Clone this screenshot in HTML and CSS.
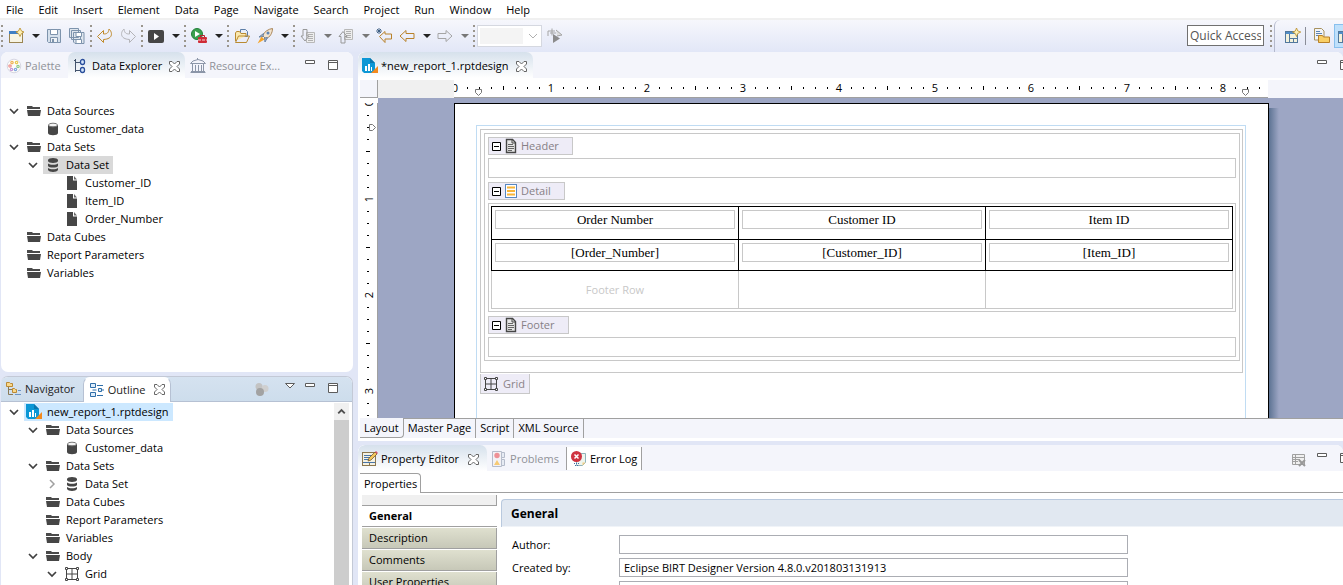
FILE: index.html
```
<!DOCTYPE html>
<html lang="en">
<head>
    <meta charset="UTF-8">
    <meta name="viewport" content="width=device-width, initial-scale=1.0">
    <title>new_report_1.rptdesign - Report Design</title>
    <link rel="stylesheet" href="styles.css">
</head>
<body>

    <!-- icon library -->
    <svg class="library" aria-hidden="true">
        <defs>
            <linearGradient id="gold" x1="0" y1="0" x2="0" y2="1"><stop offset="0" stop-color="#fffbe8"/><stop offset="1" stop-color="#f5d27a"/></linearGradient>
            <linearGradient id="grey" x1="0" y1="0" x2="0" y2="1"><stop offset="0" stop-color="#ffffff"/><stop offset="1" stop-color="#d8d8d8"/></linearGradient>
        </defs>
        <symbol id="i-new" viewBox="0 0 16 16"><rect x="1.500" y="3.500" width="13" height="11" fill="#f7f4e4" stroke="#9a8553"/><path d="M1 3h9v3H1z" fill="#3f7fc4"/><path d="M12 0l1.500 3 2.500 1-2.500 1.500L12 8.500l-1.500-3L8 4l2.500-1z" fill="#fdf0b5" stroke="#b98d2a" stroke-width=".8"/></symbol>
        <symbol id="i-save" viewBox="0 0 16 16"><path d="M1.500 1.500h13v13h-12l-1-1z" fill="#d5e0ec" stroke="#7d93ac"/><path d="M4.500 1.500h7v5h-7z" fill="#fff" stroke="#7d93ac"/><path d="M4.500 9.500h7v5h-7z" fill="#eef2f6" stroke="#7d93ac"/><path d="M6 11h2v3H6z" fill="#7d93ac"/></symbol>
        <symbol id="i-saveall" viewBox="0 0 16 16"><g fill="#dfe6ee" stroke="#7d93ac"><path d="M.5.5h9v9h-9zM2.500 2.500h9v9h-9zM4.500 4.500h10.500v11H6l-1.500-1.500z"/><path d="M7 4.500h5.500v4H7zM7 11.500h5.500v4H7z" fill="#fff"/></g></symbol>
        <symbol id="i-undo" viewBox="0 0 16 16"><path d="M.5 8.500L6.500 2.500v3.500c3.500 0 5-1 5.500-5 3.500 3 4.500 10-5.500 10.500v3z" fill="url(#gold)" stroke="#c08a2b"/></symbol>
        <symbol id="i-redo" viewBox="0 0 16 16"><path d="M15.500 8.500L9.500 2.500v3.500c-3.500 0-5-1-5.500-5-3.500 3-4.500 10 5.500 10.500v3z" fill="url(#grey)" stroke="#b4b4b8"/></symbol>
        <symbol id="i-view" viewBox="0 0 16 16"><rect y="2" width="16" height="13" rx="2" fill="#464646"/><path d="M6 5l5 3.500L6 12z" fill="#fff"/></symbol>
        <symbol id="i-run" viewBox="0 0 16 16"><circle cx="6" cy="6" r="5.500" fill="#3ba04e" stroke="#23803a"/><path d="M4 3l5 3-5 3z" fill="#fff"/><path d="M9.500 9V7.500h4V9" fill="none" stroke="#b3202c"/><rect x="7" y="9" width="9" height="6" rx="1" fill="#cf2b36"/><path d="M7 12h9" stroke="#fff" stroke-width=".8" stroke-dasharray="3 1"/></symbol>
        <symbol id="i-open" viewBox="0 0 16 16"><path d="M6.500 1.500h5l2 2v5h-7z" fill="#e8eef6" stroke="#5d7ea7"/><path d="M1.500 13V5l1-1.500h3L7 5.500h5V8" fill="#fbe9b0" stroke="#b98a31"/><path d="M1.500 14.500l3-6.500h11l-3 6.500z" fill="url(#gold)" stroke="#b98a31"/></symbol>
        <symbol id="i-rocket" viewBox="0 0 16 16"><path d="M15.500.5c-4 .5-8 3-10 7L9 11c4-2 6.500-6 6.500-10.500z" fill="#f1e3cf" stroke="#a98557"/><path d="M6.500 5.500L2 9l4-.5zM10.500 9.500L8 14l-.5-4z" fill="#9fb2c9" stroke="#6c85a4"/><path d="M4.500 8.500l3 3L.5 15.500z" fill="#f6a52a"/><circle cx="11" cy="5" r="1.500" fill="#5b83b5"/></symbol>
        <symbol id="i-next" viewBox="0 0 16 16"><path d="M6.500 4.500h8v10h-8z" fill="#eee" stroke="#b8b8b8"/><path d="M8 6.500h5M8 8.500h5M8 10.500h5M8 12.500h5" stroke="#b0b0b0"/><path d="M3 1.500h4V8h2l-4 5L1 8h2z" fill="url(#grey)" stroke="#999"/></symbol>
        <symbol id="i-prev" viewBox="0 0 16 16"><path d="M6.500 1.500h8v10h-8z" fill="#eee" stroke="#b8b8b8"/><path d="M8 3.500h5M8 5.500h5M8 7.500h5M8 9.500h5" stroke="#b0b0b0"/><path d="M3 15V8.500H1l4-5 4 5H7V15z" fill="url(#grey)" stroke="#999"/></symbol>
        <symbol id="i-lastedit" viewBox="0 0 16 16"><path d="M3.500 8.500L9 3.500V6h6.500v5H9v3.500z" fill="url(#gold)" stroke="#b9822a"/><path d="M3 0v6M0 3h6M1 1l4 4M5 1L1 5" stroke="#38597f" stroke-width=".9"/></symbol>
        <symbol id="i-back" viewBox="0 0 16 16"><path d="M1 8L7 2.500V5.500h8v5H7v3z" fill="url(#gold)" stroke="#b9822a"/></symbol>
        <symbol id="i-forward" viewBox="0 0 16 16"><path d="M15 8L9 2.500V5.500H1v5h8v3z" fill="url(#grey)" stroke="#a5a5a5"/></symbol>
        <symbol id="i-visit" viewBox="0 0 16 16"><path d="M1 8V3h7M3 5h6" fill="none" stroke="#a5a5a5"/><path d="M5 .5v7M9 2l6 5-5 1" fill="#ddd" stroke="#a5a5a5"/><path d="M6 6l7 4.500L6 15z" fill="#8b8b8b"/></symbol>
        <symbol id="i-perspective" viewBox="0 0 16 16"><rect x=".5" y="3.500" width="12" height="11" fill="#f3f1dc" stroke="#52789c"/><path d="M1 4h9v2H1z" fill="#4f8bc6"/><path d="M4.500 6v8M4.500 10.500h8M8.500 10.500v4" stroke="#52789c"/><path d="M11.500 0l1.300 3 3 1-3 1.500-1.300 3-1.200-3L7.500 4l2.800-1z" fill="#fdf0b5" stroke="#b98d2a" stroke-width=".8"/></symbol>
        <symbol id="i-files" viewBox="0 0 16 16"><path d="M.5.500h7l2.500 2.500v9H.5z" fill="#f2f4f8" stroke="#a8925e"/><path d="M2 3.500h4M2 5.500h6M2 7.500h4" stroke="#5c83b3"/><path d="M4.500 14.500v-7h4l1 1.500h6v5.500z" fill="#f9cf66" stroke="#b98128"/></symbol>
        <symbol id="i-report" viewBox="0 0 16 16"><path d="M0 0h8l5 5v10H2l-2-2z" fill="#0c97d5"/><path d="M8 0l5 5H8z" fill="#0a76ad"/><path d="M3 8h2v5H3zM6 6h2v7H6zM9 9h1v4H9z" fill="#fff"/><path d="M16 8v7H9z" fill="#f38a1e"/></symbol>
        <symbol id="i-palette" viewBox="0 0 16 16"><circle cx="8" cy="8" r="6.800" fill="#fdfdf8" stroke="#d6d6e2"/><g fill="none" stroke-width="1.200"><circle cx="6" cy="4.500" r="1.200" stroke="#efb45a"/><circle cx="10.500" cy="4.500" r="1.200" stroke="#e8ca52"/><circle cx="12" cy="8.500" r="1.200" stroke="#8fcb8f"/><circle cx="9.500" cy="11.500" r="1.200" stroke="#84a9e0"/><circle cx="4" cy="8" r="1.200" stroke="#ee9090"/><circle cx="5.500" cy="11.500" r="1.200" stroke="#c59ad8"/></g></symbol>
        <symbol id="i-explorer" viewBox="0 0 16 16"><path d="M1 2.500h1.500M2.500 1v13M2.500 4.500H7M2.500 12.500H7" fill="none" stroke="#44546c"/><g fill="#d5e6fa" stroke="#2b4f9b" stroke-width="1.300"><rect x="7.500" y="1.500" width="4" height="5" rx="2"/><rect x="7.500" y="9.500" width="4" height="5" rx="2"/></g></symbol>
        <symbol id="i-resource" viewBox="0 0 16 16"><path d="M.5 5.500h15L13 3 8 1.500 3 3zM2.500 6v7M5.500 7v6M8.500 7v6M11.500 7v6M13.500 6v7M.5 14.500h15M7.500 0v2M1 13.500h14" fill="none" stroke="#8c96a8"/></symbol>
        <symbol id="i-navigator" viewBox="0 0 16 16"><path d="M2.500 6v7.500H7M3 8.500h3" fill="none" stroke="#8a7a55"/><path d="M.5 1.500h3l1 1h2v3h-6zM6.500 7.500h2l1 1h1v3h-4z" fill="#f9d88a" stroke="#bb8a35"/><path d="M12 9.500h3M9 13.500h6" stroke="#6b94c6"/></symbol>
        <symbol id="i-outline" viewBox="0 0 16 16"><g fill="#dcecfb" stroke="#2f6ea8"><path d="M1.500 1.500h5v4h-5zM1.500 10.500h5v4h-5zM9.500 6.500h3v3h-3z"/></g><path d="M8 3.500h6M8 13.500h6M13 8h2M3.500 8h4" stroke="#2f6ea8"/></symbol>
        <symbol id="i-editor" viewBox="0 0 16 16"><rect x=".5" y="1.500" width="13" height="13" fill="#f4f1e2" stroke="#8a764f"/><path d="M2 4.500h8M2 6.500h7M2 8.500h5M1 11.500h12" stroke="#4774a8"/><path d="M7.500 12v2" stroke="#8a764f"/><path d="M6 10l1-3 6-6 2 2-6 6z" fill="#f3c75d" stroke="#7a5a2a" stroke-width=".8"/><path d="M13 1l2 2 1-1-2-2z" fill="#d6506a"/></symbol>
        <symbol id="i-problems" viewBox="0 0 16 16"><path d="M1.500.5h9v15h-9z" fill="#f3f2f5" stroke="#b5bccb"/><path d="M10.500 1.500h3v5h-3zM10.500 8.500h3v6h-3z" fill="#e6ebf3" stroke="#b5bccb"/><circle cx="6" cy="4.500" r="2.700" fill="#ee9196"/><path d="M3 14l3-5 3 5z" fill="#f7ca74"/></symbol>
        <symbol id="i-error" viewBox="0 0 16 16"><path d="M5.500 2.500h9v9l-3 3h-6z" fill="#eef5ee" stroke="#8fb3b9"/><path d="M14.500 11.500l-3 3v-3z" fill="#f2ce81"/><circle cx="5.500" cy="5.500" r="5.500" fill="#cf3340"/><path d="M3.500 3.500l4 4M7.500 3.500l-4 4" stroke="#fff" stroke-width="1.500"/><path d="M3 12.500h5M4 14.500h4" stroke="#3e6ca5" stroke-dasharray="1 1"/></symbol>
        <symbol id="i-folder" viewBox="0 0 16 16"><path d="M1 3h5l1 1h7v2H1z" fill="#4a4a4a"/><path d="M1 7h14l-1 6H2z" fill="#464646"/></symbol>
        <symbol id="i-source" viewBox="0 0 16 16"><path d="M3 4v8c0 3 10 3 10 0V4z" fill="#464646"/><ellipse cx="8" cy="4" rx="4.500" ry="1.800" fill="#f4f4f4" stroke="#777"/></symbol>
        <symbol id="i-set" viewBox="0 0 16 16"><g fill="#464646"><path d="M3 3c0-2.700 10-2.700 10 0v1c0 2.500-10 2.500-10 0z"/><path d="M3 6.500c2 1.700 8 1.700 10 0V9c-1 2-9 2-10 0zM3 11c2 1.700 8 1.700 10 0v2c-1 2.500-9 2.500-10 0z"/></g></symbol>
        <symbol id="i-column" viewBox="0 0 16 16"><path d="M3 1h6v4.500h4V15H3z" fill="#464646"/><path d="M10 1l3 3.500h-3z" fill="#6a6a6a"/></symbol>
        <symbol id="i-grid" viewBox="0 0 16 16"><path d="M2.500 2.500h11v11h-11zM8 2.500v11M2.500 8h11" fill="none" stroke="#464646"/><path d="M1.500 1.500h2v2h-2zM12.500 1.500h2v2h-2zM1.500 12.500h2v2h-2zM12.500 12.500h2v2h-2z" fill="#fff" stroke="#464646"/></symbol>
        <symbol id="i-band" viewBox="0 0 16 16"><path d="M3.500 1.500h6l3 3v10h-9z" fill="#e6e6e6" stroke="#464646" stroke-width="1.400"/><path d="M9 1.500V5h4" fill="none" stroke="#464646"/><path d="M5 6.500h5M5 8.500h6M5 10.500h6M5 12.500h4" stroke="#666"/></symbol>
        <symbol id="i-detail" viewBox="0 0 16 16"><rect x="2.500" y="1.500" width="11" height="13" fill="#fff" stroke="#5787c0"/><path d="M4 4.500h8M4 8h8M4 11.500h8" stroke="#f8b437" stroke-width="2"/></symbol>
        <symbol id="i-minus" viewBox="0 0 9 9"><path d="M.5.5h8v8h-8z" fill="#fff" stroke="#000"/><path d="M2 4.500h5" stroke="#000"/></symbol>
        <symbol id="i-close" viewBox="0 0 11 11"><path d="M.5.5h2.500l2.500 2.500L8 .5h2.500V3L8 5.500 10.500 8v2.500H8L5.500 8 3 10.500H.5V8L3 5.500.5 3z" fill="#fff" stroke="#666"/></symbol>
        <symbol id="i-min" viewBox="0 0 11 11"><path d="M.5.5h9v3h-9z" fill="#fff" stroke="#5c5c5c"/></symbol>
        <symbol id="i-max" viewBox="0 0 11 11"><path d="M.5.5h9v9h-9zM.5 2.500h9" fill="#fff" stroke="#5c5c5c"/></symbol>
        <symbol id="i-menu" viewBox="0 0 11 11"><path d="M.5.5h9L5 5z" fill="#fff" stroke="#5c5c5c"/></symbol>
        <symbol id="i-balls" viewBox="0 0 16 16"><circle cx="4" cy="3.500" r="3.500" fill="#c3c3c3"/><circle cx="10" cy="5.500" r="3.500" fill="#cfcfcf"/><circle cx="5" cy="9" r="4" fill="#a2a2a2"/></symbol>
        <symbol id="i-custom" viewBox="0 0 16 16"><path d="M1.500 1.500h12v10h-12zM1 4.500h13M1 6.500h8M1 8.500h6M4.500 2v9" fill="#f0f0f0" stroke="#a0a0a0"/><path d="M8 7l6 6m0-6l-6 6" stroke="#999" stroke-width="2"/></symbol>
        <symbol id="i-open-node" viewBox="0 0 10 10"><path d="M1 3l4 4 4-4" fill="none" stroke="#404040" stroke-width="1.700"/></symbol>
        <symbol id="i-closed-node" viewBox="0 0 10 10"><path d="M3 1l4 4-4 4" fill="none" stroke="#a0a0a0" stroke-width="1.500"/></symbol>
        <symbol id="i-marker" viewBox="0 0 8 8"><path d="M.5.5h6v3l-3 3-3-3z" fill="#fff" stroke="#777"/></symbol>
    </svg>

    <nav class="menubar">
        <a href="#">File</a>
        <a href="#">Edit</a>
        <a href="#">Insert</a>
        <a href="#">Element</a>
        <a href="#">Data</a>
        <a href="#">Page</a>
        <a href="#">Navigate</a>
        <a href="#">Search</a>
        <a href="#">Project</a>
        <a href="#">Run</a>
        <a href="#">Window</a>
        <a href="#">Help</a>
    </nav>

    <div class="toolbar">
        <span class="handle"></span>
        <button class="tool" aria-label="New"><svg class="icon"><use href="#i-new"/></svg></button>
        <button class="drop" aria-label="New menu"></button>
        <button class="tool" aria-label="Save"><svg class="icon"><use href="#i-save"/></svg></button>
        <button class="tool" aria-label="Save all"><svg class="icon"><use href="#i-saveall"/></svg></button>
        <span class="handle"></span>
        <button class="tool" aria-label="Undo"><svg class="icon"><use href="#i-undo"/></svg></button>
        <button class="tool" aria-label="Redo"><svg class="icon"><use href="#i-redo"/></svg></button>
        <span class="handle"></span>
        <button class="tool" aria-label="View report"><svg class="icon"><use href="#i-view"/></svg></button>
        <button class="drop" aria-label="View menu"></button>
        <span class="handle"></span>
        <button class="tool" aria-label="Run"><svg class="icon"><use href="#i-run"/></svg></button>
        <button class="drop" aria-label="Run menu"></button>
        <span class="handle"></span>
        <button class="tool" aria-label="Open"><svg class="icon"><use href="#i-open"/></svg></button>
        <button class="tool" aria-label="Search"><svg class="icon"><use href="#i-rocket"/></svg></button>
        <button class="drop" aria-label="Search menu"></button>
        <span class="handle"></span>
        <button class="tool" aria-label="Next annotation"><svg class="icon"><use href="#i-next"/></svg></button>
        <button class="drop dim" aria-label="Next menu"></button>
        <button class="tool" aria-label="Previous annotation"><svg class="icon"><use href="#i-prev"/></svg></button>
        <button class="drop dim" aria-label="Previous menu"></button>
        <button class="tool" aria-label="Last edit"><svg class="icon"><use href="#i-lastedit"/></svg></button>
        <button class="tool" aria-label="Back"><svg class="icon"><use href="#i-back"/></svg></button>
        <button class="drop" aria-label="Back menu"></button>
        <button class="tool" aria-label="Forward"><svg class="icon"><use href="#i-forward"/></svg></button>
        <button class="drop dim" aria-label="Forward menu"></button>
        <span class="handle"></span>
        <div class="combo">
            <select aria-label="Zoom" disabled></select>
            <svg class="combo-arrow" viewBox="0 0 10 10"><path d="M1 3l4 4 4-4" fill="none" stroke="#b0b0b0"/></svg>
        </div>
        <button class="tool" aria-label="Go"><svg class="icon"><use href="#i-visit"/></svg></button>

        <div class="perspectives">
            <input class="quick" type="text" placeholder="Quick Access" aria-label="Quick Access">
            <span class="handle"></span>
            <span class="curve"></span>
            <button class="tool" aria-label="Open perspective"><svg class="icon"><use href="#i-perspective"/></svg></button>
            <span class="line"></span>
            <button class="tool" aria-label="Resource"><svg class="icon"><use href="#i-files"/></svg></button>
            <button class="tool current" aria-label="Report Design"><svg class="icon"><use href="#i-perspective"/></svg></button>
        </div>
    </div>

    <div class="workbench">
        <div class="side">
            <section class="panel explorer">
                <div class="tabs">
                    <button class="tab palette"><svg class="icon"><use href="#i-palette"/></svg>Palette</button>
                    <button class="tab active"><svg class="icon"><use href="#i-explorer"/></svg>Data Explorer<svg class="small"><use href="#i-close"/></svg></button>
                    <button class="tab"><svg class="icon"><use href="#i-resource"/></svg>Resource Ex...</button>
                    <div class="controls">
                        <button aria-label="Minimize"><svg class="small"><use href="#i-min"/></svg></button>
                        <button aria-label="Maximize"><svg class="small"><use href="#i-max"/></svg></button>
                    </div>
                </div>
                <ul class="tree">
                    <li><div class="node"><svg class="twisty"><use href="#i-open-node"/></svg><span><svg class="icon"><use href="#i-folder"/></svg>Data Sources</span></div>
                        <ul>
                            <li><div class="node leaf"><span><svg class="icon"><use href="#i-source"/></svg>Customer_data</span></div></li>
                        </ul>
                    </li>
                    <li><div class="node"><svg class="twisty"><use href="#i-open-node"/></svg><span><svg class="icon"><use href="#i-folder"/></svg>Data Sets</span></div>
                        <ul>
                            <li><div class="node"><svg class="twisty"><use href="#i-open-node"/></svg><span class="picked"><svg class="icon"><use href="#i-set"/></svg>Data Set</span></div>
                                <ul>
                                    <li><div class="node leaf"><span><svg class="icon"><use href="#i-column"/></svg>Customer_ID</span></div></li>
                                    <li><div class="node leaf"><span><svg class="icon"><use href="#i-column"/></svg>Item_ID</span></div></li>
                                    <li><div class="node leaf"><span><svg class="icon"><use href="#i-column"/></svg>Order_Number</span></div></li>
                                </ul>
                            </li>
                        </ul>
                    </li>
                    <li><div class="node leaf"><span><svg class="icon"><use href="#i-folder"/></svg>Data Cubes</span></div></li>
                    <li><div class="node leaf"><span><svg class="icon"><use href="#i-folder"/></svg>Report Parameters</span></div></li>
                    <li><div class="node leaf"><span><svg class="icon"><use href="#i-folder"/></svg>Variables</span></div></li>
                </ul>
            </section>

            <section class="panel outline">
                <div class="tabs">
                    <button class="tab navigator"><svg class="icon"><use href="#i-navigator"/></svg>Navigator</button>
                    <button class="tab active"><svg class="icon"><use href="#i-outline"/></svg>Outline<svg class="small"><use href="#i-close"/></svg></button>
                    <div class="controls">
                        <button class="balls" aria-label="Focus"><svg class="icon"><use href="#i-balls"/></svg></button>
                        <button class="view-menu" aria-label="View menu"><svg class="small"><use href="#i-menu"/></svg></button>
                        <button aria-label="Minimize"><svg class="small"><use href="#i-min"/></svg></button>
                        <button aria-label="Maximize"><svg class="small"><use href="#i-max"/></svg></button>
                    </div>
                </div>
                <div class="outline-body">
                    <ul class="tree">
                        <li><div class="node"><svg class="twisty"><use href="#i-open-node"/></svg><span class="focused"><svg class="icon"><use href="#i-report"/></svg>new_report_1.rptdesign</span></div>
                            <ul>
                                <li><div class="node"><svg class="twisty"><use href="#i-open-node"/></svg><span><svg class="icon"><use href="#i-folder"/></svg>Data Sources</span></div>
                                    <ul>
                                        <li><div class="node leaf"><span><svg class="icon"><use href="#i-source"/></svg>Customer_data</span></div></li>
                                    </ul>
                                </li>
                                <li><div class="node"><svg class="twisty"><use href="#i-open-node"/></svg><span><svg class="icon"><use href="#i-folder"/></svg>Data Sets</span></div>
                                    <ul>
                                        <li><div class="node"><svg class="twisty"><use href="#i-closed-node"/></svg><span><svg class="icon"><use href="#i-set"/></svg>Data Set</span></div></li>
                                    </ul>
                                </li>
                                <li><div class="node leaf"><span><svg class="icon"><use href="#i-folder"/></svg>Data Cubes</span></div></li>
                                <li><div class="node leaf"><span><svg class="icon"><use href="#i-folder"/></svg>Report Parameters</span></div></li>
                                <li><div class="node leaf"><span><svg class="icon"><use href="#i-folder"/></svg>Variables</span></div></li>
                                <li><div class="node"><svg class="twisty"><use href="#i-open-node"/></svg><span><svg class="icon"><use href="#i-folder"/></svg>Body</span></div>
                                    <ul>
                                        <li><div class="node"><svg class="twisty"><use href="#i-open-node"/></svg><span><svg class="icon"><use href="#i-grid"/></svg>Grid</span></div></li>
                                    </ul>
                                </li>
                            </ul>
                        </li>
                    </ul>
                    <div class="scrollbar">
                        <svg class="up" viewBox="0 0 16 16"><path d="M4.500 10L8 6.500l3.500 3.500" fill="none" stroke="#505050" stroke-width="2"/></svg>
                        <div class="thumb"></div>
                    </div>
                </div>
            </section>
        </div>

        <div class="main">
            <section class="panel editor">
                <div class="tabs">
                    <button class="tab active"><svg class="icon"><use href="#i-report"/></svg>*new_report_1.rptdesign<svg class="small"><use href="#i-close"/></svg></button>
                    <div class="controls">
                        <button aria-label="Minimize"><svg class="small"><use href="#i-min"/></svg></button>
                        <button aria-label="Maximize"><svg class="small"><use href="#i-max"/></svg></button>
                    </div>
                </div>
                <div class="layout">
                    <div class="corner"></div>
                    <div class="ruler-row">
                        <div class="ruler">
                            <span class="unit"><b>0</b></span>
                            <span class="unit"><b>1</b></span>
                            <span class="unit"><b>2</b></span>
                            <span class="unit"><b>3</b></span>
                            <span class="unit"><b>4</b></span>
                            <span class="unit"><b>5</b></span>
                            <span class="unit"><b>6</b></span>
                            <span class="unit"><b>7</b></span>
                            <span class="unit"><b>8</b></span>
                            <svg class="marker start"><use href="#i-marker"/></svg>
                            <svg class="marker end"><use href="#i-marker"/></svg>
                        </div>
                    </div>
                    <div class="vruler">
                        <span class="unit"><b>0</b></span>
                        <span class="unit"><b>1</b></span>
                        <span class="unit"><b>2</b></span>
                        <span class="unit"><b>3</b></span>
                        <svg class="marker top"><use href="#i-marker"/></svg>
                    </div>
                    <div class="canvas">
                        <div class="page">
                            <div class="margins">
                                <div class="grid-item">
                                    <div class="list-item">
                                        <div class="band"><svg class="minus"><use href="#i-minus"/></svg><svg class="icon"><use href="#i-band"/></svg>Header</div>
                                        <div class="slot"></div>
                                        <div class="band"><svg class="minus"><use href="#i-minus"/></svg><svg class="icon"><use href="#i-detail"/></svg>Detail</div>
                                        <div class="slot filled">
                                            <table>
                                                <tr class="head">
                                                    <th><div class="label">Order Number</div></th>
                                                    <th><div class="label">Customer ID</div></th>
                                                    <th><div class="label">Item ID</div></th>
                                                </tr>
                                                <tr class="row">
                                                    <td><div class="label">[Order_Number]</div></td>
                                                    <td><div class="label">[Customer_ID]</div></td>
                                                    <td><div class="label">[Item_ID]</div></td>
                                                </tr>
                                                <tr class="foot">
                                                    <td>Footer Row</td>
                                                    <td></td>
                                                    <td></td>
                                                </tr>
                                            </table>
                                        </div>
                                        <div class="band"><svg class="minus"><use href="#i-minus"/></svg><svg class="icon"><use href="#i-band"/></svg>Footer</div>
                                        <div class="slot"></div>
                                    </div>
                                </div>
                                <div class="grid-tag"><svg class="icon"><use href="#i-grid"/></svg>Grid</div>
                            </div>
                        </div>
                    </div>
                </div>
                <div class="page-tabs">
                    <button class="selected">Layout</button>
                    <button>Master Page</button>
                    <button>Script</button>
                    <button>XML Source</button>
                    <span class="rest"></span>
                </div>
            </section>

            <section class="panel property">
                <div class="tabs">
                    <button class="tab active"><svg class="icon"><use href="#i-editor"/></svg>Property Editor<svg class="small"><use href="#i-close"/></svg></button>
                    <button class="tab problems"><svg class="icon"><use href="#i-problems"/></svg>Problems</button>
                    <button class="tab errors"><svg class="icon"><use href="#i-error"/></svg>Error Log</button>
                    <div class="controls">
                        <button class="custom" aria-label="Customize"><svg class="icon"><use href="#i-custom"/></svg></button>
                        <button aria-label="Minimize"><svg class="small"><use href="#i-min"/></svg></button>
                        <button aria-label="Maximize"><svg class="small"><use href="#i-max"/></svg></button>
                    </div>
                </div>
                <div class="sub-tabs">
                    <button>Properties</button>
                    <span class="rest"></span>
                </div>
                <div class="property-body">
                    <div class="categories">
                        <div class="filler"></div>
                        <button class="selected">General</button>
                        <button>Description</button>
                        <button>Comments</button>
                        <button>User Properties</button>
                    </div>
                    <form class="details">
                        <h2>General</h2>
                        <div class="field">
                            <label for="author">Author:</label>
                            <input type="text" id="author">
                        </div>
                        <div class="field">
                            <label for="created">Created by:</label>
                            <input type="text" id="created" value="Eclipse BIRT Designer Version 4.8.0.v201803131913">
                        </div>
                        <div class="field">
                            <label for="path"></label>
                            <input type="text" id="path" aria-label="Path">
                        </div>
                    </form>
                </div>
            </section>
        </div>
    </div>

</body>
</html>
```
FILE: styles.css
```
* {
  margin: 0;
  padding: 0;
  box-sizing: border-box;
}
body {
  font-family: "Open Sans", "Noto Sans", sans-serif;
  font-size: 11px;
  line-height: 18px;
  color: #000;
  background-color: #e1e6f6;
  height: 100vh;
  overflow: hidden;
  display: flex;
  flex-direction: column;
}
button, input, select {
  font: inherit;
  color: inherit;
  border: none;
  background: none;
}
svg {
  display: block;
  flex: none;
}
.library {
  display: none;
}
.icon {
  width: 16px;
  height: 16px;
}
.small {
  width: 11px;
  height: 11px;
}

/* menu */
.menubar {
  flex: none;
  display: flex;
  gap: 15px;
  height: 20px;
  padding-left: 6px;
  background-color: #fff;
  border-bottom: 2px solid #f0f0f0;
}
.menubar a {
  color: #000;
  line-height: 20px;
  text-decoration: none;
}

/* toolbar */
.toolbar {
  flex: none;
  display: flex;
  align-items: center;
  height: 32px;
  background: linear-gradient(#f6f7fc, #e2e7f7);
}
.handle {
  flex: none;
  width: 5px;
  height: 22px;
  background: repeating-linear-gradient(#9a958c 0 2px, transparent 2px 5px) 1px 0 / 2px 22px no-repeat;
}
.tool {
  flex: none;
  width: 23px;
  height: 24px;
  padding-left: 3px;
}
.drop {
  flex: none;
  width: 15px;
  height: 24px;
}
.drop::before {
  content: "";
  display: block;
  width: 0;
  margin: 0 auto;
  border: 4px solid transparent;
  border-top-color: #222;
  border-bottom: none;
}
.drop.dim::before {
  border-top-color: #777;
}
.combo {
  position: relative;
  width: 65px;
  height: 22px;
  margin-right: 2px;
  padding: 2px;
  background-color: #fff;
  border: 1px solid #d5d8e0;
}
.combo select {
  display: block;
  appearance: none;
  width: 43px;
  height: 16px;
  background-color: #f0f0f0;
}
.combo-arrow {
  position: absolute;
  top: 5px;
  right: 3px;
  width: 10px;
  height: 10px;
}
.perspectives {
  display: flex;
  align-items: center;
  height: 32px;
  margin-left: auto;
  margin-right: -14px;
}
.quick {
  width: 77px;
  height: 21px;
  margin: 0 5px 1px 0;
  padding: 0 2px;
  font-size: 12px;
  color: #555;
  background-color: #fff;
  border: 1px solid #707070;
}
.quick::placeholder {
  color: #555;
}
.curve {
  width: 7px;
  height: 32px;
  margin-right: 1px;
  border-left: 1px solid #b4b9cc;
  border-radius: 6px 0 0 0;
}
.line {
  width: 1px;
  height: 18px;
  margin: 0 5px 0 0;
  background-color: #8a8d98;
}
.tool.current {
  background-color: #bfe0fb;
  border: 1px solid #88c0ee;
}

/* workbench */
.workbench {
  flex: 1;
  min-height: 0;
  display: flex;
  gap: 5px;
  padding-left: 1px;
}
.side {
  flex: none;
  width: 352px;
  display: flex;
  flex-direction: column;
  gap: 4px;
}
.main {
  flex: 1;
  min-width: 0;
  display: flex;
  flex-direction: column;
  gap: 4px;
}
.panel {
  background-color: #fff;
  border-radius: 7px 7px 0 0;
  overflow: hidden;
}
.tabs {
  display: flex;
  height: 26px;
  background-color: #f4f5fb;
}
.tab {
  display: flex;
  align-items: center;
  gap: 3px;
  padding: 2px 5px 0;
  color: #909298;
  white-space: nowrap;
}
.tab.active {
  color: #000;
  background: linear-gradient(#d6e1ec, #fff);
  border-radius: 7px 7px 0 0;
}
.tab .small {
  margin-left: 4px;
}
.controls {
  display: flex;
  gap: 12px;
  margin-left: auto;
  padding: 8px 14px 0 0;
}
.controls button {
  display: block;
  height: 11px;
}

/* data explorer */
.explorer {
  flex: 1;
  min-height: 0;
  border-radius: 7px;
}
.palette {
  width: 67px;
}
.tree, .tree ul {
  list-style: none;
}
.tree ul {
  padding-left: 19px;
}
.explorer .tree {
  padding: 24px 0 0 8px;
}
.node {
  display: flex;
  align-items: center;
  height: 18px;
}
.node.leaf {
  padding-left: 15px;
}
.twisty {
  width: 10px;
  height: 10px;
  margin-right: 5px;
}
.node span {
  display: flex;
  align-items: center;
  gap: 5px;
  padding: 0 4px 0 2px;
}
.node .picked {
  background-color: #d9d9d9;
}
.node .focused {
  background-color: #cce8ff;
}

/* outline */
.outline {
  flex: none;
  height: 209px;
  border: 1px solid #c3c9d6;
  border-left-width: 0;
  border-bottom: none;
}
.outline .tabs {
  height: 25px;
  background: linear-gradient(#d5e2f0, #cdddec);
  border-bottom: 1px solid #b6c1d3;
}
.outline .tab {
  height: 25px;
  padding: 0 5px 1px;
  color: #222;
}
.outline .navigator {
  padding-right: 8px;
}
.outline .tab.active {
  height: 25px;
  background: #fff;
  border: 1px solid #b6c1d3;
  border-top-color: #fff;
  border-bottom: none;
}
.outline .tab .small {
  margin-left: 5px;
}
.outline .controls {
  padding: 6px 13px 0 0;
}
.outline .balls {
  height: 16px;
  margin-right: 2px;
}
.outline .view-menu {
  margin-right: -3px;
}
.outline-body {
  display: flex;
  justify-content: space-between;
  padding: 1px 3px 0 8px;
}
.scrollbar {
  width: 15px;
  background-color: #f0f0f0;
}
.up {
  width: 15px;
  height: 17px;
}
.thumb {
  height: 166px;
  background-color: #cdcdcd;
}

/* editor */
.editor {
  flex: 1;
  min-height: 0;
  display: flex;
  flex-direction: column;
  padding-bottom: 3px;
}
.editor .tabs, .property .tabs {
  flex: none;
}
.editor .tab {
  padding: 2px 6px 0 4px;
}
.main .controls {
  padding-right: 0;
  margin-right: -8px;
}
.layout {
  flex: 1;
  min-height: 0;
  display: grid;
  grid-template-columns: 18px 1fr;
  grid-template-rows: 18px 1fr;
  margin: 2px 0 0 2px;
  overflow: hidden;
}
.corner {
  background-color: #f4f5fb;
  border-right: 1px solid #a0a0a0;
  border-bottom: 1px solid #a0a0a0;
}
.ruler-row {
  background: linear-gradient(90deg, #f0f0f0 76px, #f4f5fb 76px);
}
.ruler {
  position: relative;
  display: flex;
  width: 814px;
  height: 18px;
  margin-left: 76px;
  padding-bottom: 2px;
  background-color: #fff;
  border-bottom: 1px solid #a0a0a0;
  overflow: hidden;
}
.unit {
  flex: none;
  display: flex;
  justify-content: center;
  align-items: center;
}
.unit b {
  font-weight: normal;
  background-color: #fff;
}
.ruler .unit {
  width: 96px;
  background:
    linear-gradient(#000, #000) 0 6px / 1px 4px no-repeat,
    repeating-linear-gradient(90deg, #000 0 1px, transparent 1px 12px) 0 7px / 96px 2px no-repeat;
}
.ruler .unit:first-child {
  margin-left: -47px;
}
.marker {
  position: absolute;
  width: 8px;
  height: 8px;
}
.marker.start {
  left: 21px;
  bottom: 0;
}
.marker.end {
  right: 18px;
  bottom: 0;
}
.vruler {
  position: relative;
  margin-top: 5px;
  overflow: hidden;
  background-color: #fff;
  border-right: 1px solid #a0a0a0;
}
.vruler .unit {
  height: 96px;
  background:
    linear-gradient(#000, #000) 6px 0 / 4px 1px no-repeat,
    repeating-linear-gradient(#000 0 1px, transparent 1px 12px) 7px 0 / 2px 96px no-repeat;
}
.vruler .unit:first-child {
  margin-top: -48px;
}
.vruler b {
  line-height: 15px;
  writing-mode: vertical-rl;
  transform: rotate(180deg);
}
.marker.top {
  top: 20px;
  right: 0;
  transform: rotate(-90deg);
}
.canvas {
  min-width: 0;
  padding: 5px 0 0 76px;
  background-color: #9da6c4;
  overflow: hidden;
}
.page {
  position: relative;
  width: 815px;
  height: 100%;
  padding: 21px 22px 0 21px;
  background-color: #fff;
  border: 1px solid #000;
  border-bottom: none;
}
.page::after {
  content: "";
  position: absolute;
  top: 4px;
  bottom: 0;
  left: 100%;
  width: 10px;
  margin-left: 1px;
  background: linear-gradient(90deg, #5d7393, #9da6c4);
}
.margins {
  height: 100%;
  padding: 3px 2px 0 3px;
  border: 1px solid #c0dcf3;
  border-bottom: none;
}
.grid-item {
  padding: 3px 2px 11px 3px;
  border: 1px solid #c8c8c8;
}
.list-item {
  padding: 3px;
  border: 1px solid #c8c8c8;
}
.band {
  display: flex;
  align-items: center;
  gap: 2px;
  width: fit-content;
  height: 18px;
  margin-bottom: 3px;
  padding: 0 13px 0 3px;
  color: #868086;
  background-color: #eeecf7;
  border: 1px solid #c8c8c8;
}
.minus {
  width: 9px;
  height: 9px;
}
.slot {
  height: 20px;
  border: 1px solid #c8c8c8;
}
.slot + .band {
  margin-top: 4px;
}
.slot.filled {
  height: auto;
  padding: 2px;
}
.slot table {
  width: 100%;
  table-layout: fixed;
  border-collapse: collapse;
}
.slot th, .slot td {
  padding: 3px;
  vertical-align: top;
  text-align: center;
  font-family: "Liberation Serif", serif;
  font-size: 13px;
  font-weight: normal;
  border: 1px solid #000;
}
.head {
  height: 33px;
}
.row {
  height: 31px;
}
.foot {
  height: 38px;
}
.label {
  height: 19px;
  line-height: 18px;
  border: 1px solid #c8c8c8;
}
.slot .foot td {
  vertical-align: middle;
  font-family: "Open Sans", sans-serif;
  font-size: 11px;
  color: #c8c8c8;
  border-color: #c8c8c8;
}
.grid-tag {
  display: flex;
  align-items: center;
  gap: 4px;
  width: fit-content;
  height: 20px;
  margin-top: 1px;
  padding: 0 4px 0 2px;
  color: #8b8489;
  background-color: #eeecf7;
  border: 1px solid #c8c8c8;
  border-top: none;
}
.page-tabs {
  flex: none;
  display: flex;
  height: 20px;
  margin-left: 2px;
  background-color: #f4f5fb;
}
.page-tabs button {
  padding: 0 4px 2px;
  border-top: 1px solid #a0a0a0;
  border-right: 1px solid #a0a0a0;
}
.page-tabs .selected {
  padding: 0 4px;
  border-top: none;
  border-bottom: 1px solid #a0a0a0;
  border-radius: 0 0 4px 0;
}
.rest {
  flex: 1;
  border-top: 1px solid #a0a0a0;
}

/* property editor */
.property {
  flex: none;
  height: 140px;
}
.property .tab.active {
  padding: 2px 8px 0 4px;
}
.property .tab .small {
  margin-left: 6px;
}
.problems {
  padding: 2px 7px 0 4px;
}
.property .errors {
  height: 23px;
  margin-top: 2px;
  padding: 0 4px;
  color: #000;
  background-color: #fff;
  border: 1px solid #a0a0a0;
  border-width: 0 1px;
}
.property .custom {
  height: 16px;
  margin-right: -2px;
}
.sub-tabs {
  display: flex;
  height: 20px;
  margin: 2px 0 0 2px;
}
.sub-tabs button {
  padding: 0 3px 0 4px;
  border: 1px solid #a0a0a0;
  border-width: 1px 1px 0 0;
  border-radius: 0 4px 0 0;
}
.sub-tabs .rest {
  border-top: none;
  border-bottom: 1px solid #a0a0a0;
}
.property-body {
  display: flex;
  gap: 4px;
  padding: 2px 0 0 4px;
}
.categories {
  flex: none;
  width: 135px;
}
.categories .filler {
  height: 11px;
  background-color: #f0f0f0;
  border-right: 1px solid #a0a0a0;
  border-bottom: 1px solid #a0a0a0;
}
.categories button {
  display: block;
  width: 100%;
  height: 21px;
  margin-bottom: 1px;
  padding-left: 7px;
  text-align: left;
  background: linear-gradient(#dfe0cf, #c7c8b8);
  border-right: 1px solid #a0a0a0;
  border-bottom: 1px solid #a0a0a0;
}
.categories .selected {
  font-weight: bold;
  background: #fff;
  border-right: none;
}
.details {
  flex: 1;
  margin-top: 4px;
}
.details h2 {
  height: 28px;
  margin-bottom: 8px;
  padding-left: 9px;
  font-size: 12px;
  line-height: 28px;
  background: linear-gradient(#e1e8f1 26px, #fff);
  border: 1px solid #b9c9de;
  border-width: 1px 0 0 1px;
  border-radius: 4px 0 0 0;
}
.field {
  display: flex;
  align-items: center;
  margin-bottom: 4px;
  padding-left: 11px;
}
.field label {
  width: 107px;
}
.field input {
  width: 509px;
  height: 19px;
  padding: 0 4px;
  background-color: #fff;
  border: 1px solid #abadb3;
}
```
